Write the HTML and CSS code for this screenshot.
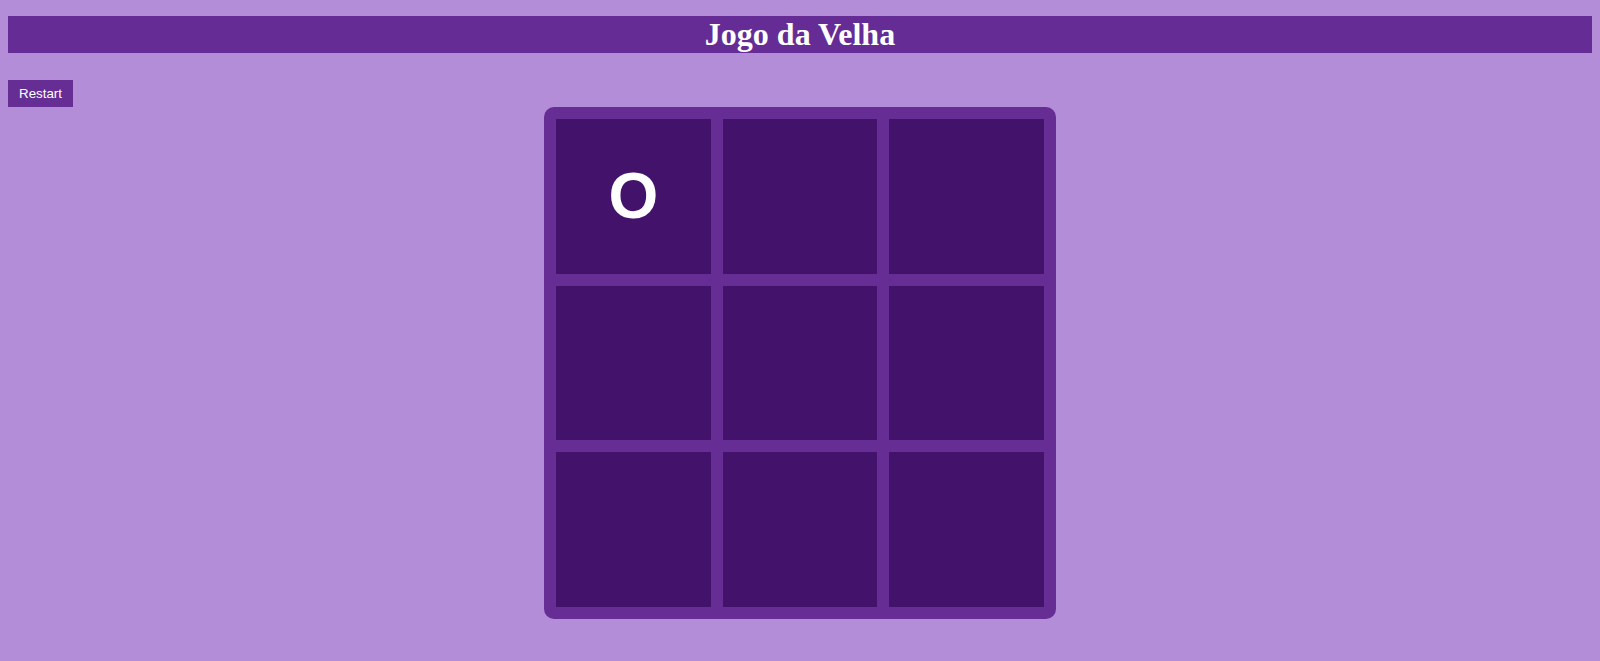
FILE: index.html
```html
<!DOCTYPE html>
<html>
<head>
<meta charset="utf-8">
<title>Jogo da Velha</title>
<link rel="stylesheet" href="styles.css">
</head>
<body>
<h1 class="title">Jogo da Velha</h1>
<button class="restart">Restart</button>
<div class="board">
  <div class="cell">O</div>
  <div class="cell"></div>
  <div class="cell"></div>
  <div class="cell"></div>
  <div class="cell"></div>
  <div class="cell"></div>
  <div class="cell"></div>
  <div class="cell"></div>
  <div class="cell"></div>
</div>
</body>
</html>
```
FILE: styles.css
```css
html, body {
  margin: 0;
  padding: 0;
}
body {
  background: #b48dd9;
  padding: 16px 8px 0;
  font-family: "Liberation Serif", serif;
}
.title {
  margin: 0;
  background: #652c96;
  color: #ffffff;
  text-align: center;
  font-size: 32px;
  line-height: 37px;
  font-weight: bold;
}
.restart {
  display: block;
  margin: 27px 0 0;
  border: none;
  background: #662d95;
  color: #ffffff;
  font-family: "Liberation Sans", Arial, sans-serif;
  font-size: 13.333px;
  line-height: 15px;
  padding: 6px 11px;
  cursor: pointer;
}
.board {
  width: 500px;
  margin: 0 auto;
  padding: 6px;
  background: #662d95;
  border-radius: 10px;
  display: grid;
  grid-template-columns: repeat(3, 1fr);
}
.cell {
  aspect-ratio: 1 / 1;
  border: 6px solid #662d95;
  background: #43136b;
  color: #ffffff;
  font-family: "Liberation Sans", Arial, sans-serif;
  font-weight: bold;
  font-size: 64px;
  display: flex;
  align-items: center;
  justify-content: center;
}
```
